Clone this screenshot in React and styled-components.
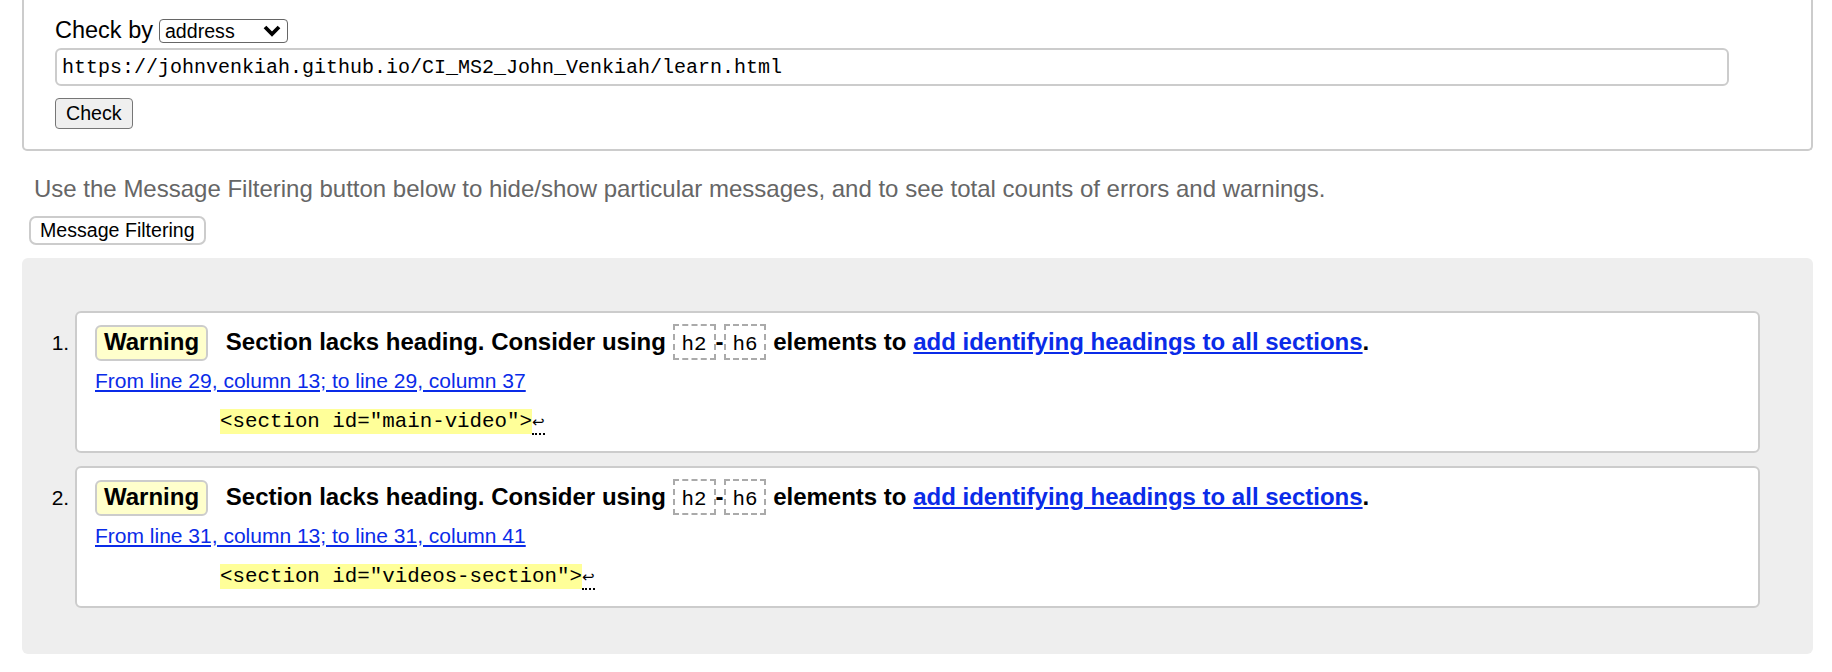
import React from 'react';
import styled, { createGlobalStyle } from 'styled-components';

const GlobalStyle = createGlobalStyle`
  body {
    margin: 0;
    background: #fff;
    color: #000;
    font-family: "Liberation Sans", Arial, Helvetica, sans-serif;
    font-size: 23.5px;
  }
`;

const Page = styled.div`
  padding: 0 19px 0 22px;
`;

const Fieldset = styled.fieldset`
  margin: 0;
  min-width: 0;
  padding: 17px 31px 20px;
  border: 2px solid #ccc;
  border-top: none;
  border-radius: 0 0 5px 5px;
  display: flex;
  flex-direction: column;
  align-items: flex-start;
`;

const CheckByRow = styled.div`
  display: flex;
  align-items: baseline;
  gap: 6px;
`;

const FakeSelect = styled.span`
  display: inline-flex;
  align-items: center;
  justify-content: space-between;
  box-sizing: border-box;
  width: 129px;
  height: 24px;
  padding: 0 5px;
  border: 1px solid #666;
  border-radius: 4px;
  font-size: 19.6px;
  line-height: 20px;
`;

const UrlInput = styled.input`
  box-sizing: border-box;
  width: 1674px;
  height: 38px;
  margin: 4px 0 0;
  padding: 0 5px;
  border: 2px solid #ccc;
  border-radius: 6px;
  background: #fff;
  color: #000;
  font-family: "Liberation Mono", "Courier New", monospace;
  font-size: 20px;
  outline: none;
`;

const CheckButton = styled.button`
  margin-top: 12px;
  height: 31px;
  padding: 0 10px;
  border: 1px solid #767676;
  border-radius: 4px;
  background: #efefef;
  color: #000;
  font-family: "Liberation Sans", Arial, sans-serif;
  font-size: 19.6px;
`;

const Intro = styled.p`
  margin: 24px 0 0 12px;
  color: #666;
  font-size: 24px;
  line-height: normal;
`;

const FilterButton = styled.button`
  display: block;
  margin: 13px 0 0 7px;
  height: 29px;
  padding: 0 9px;
  border: 2px solid #ccc;
  border-radius: 7px;
  background: #fff;
  color: #000;
  font-family: "Liberation Sans", Arial, sans-serif;
  font-size: 19.6px;
`;

const Results = styled.ol`
  margin: 13px 0 0;
  padding: 53px 53px 46px;
  background: #eee;
  border-radius: 6px;
  list-style: decimal;
`;

const Message = styled.li`
  background: #fff;
  border: 2px solid #ccc;
  border-radius: 6px;
  padding: 11px 18px 14px;
  margin-bottom: 13px;
  font-size: 21px;

  &:last-child {
    margin-bottom: 0;
  }

  &::marker {
    font-size: 21px;
  }
`;

const Heading = styled.p`
  margin: 0;
  font-size: 24px;
  font-weight: bold;
  line-height: 30px;
`;

const Badge = styled.strong`
  display: inline-block;
  padding: 1px 7px 4px;
  margin-right: 11px;
  line-height: 27px;
  border: 2px solid #ccc;
  border-radius: 6px;
  background: #ffc;
`;

const Tag = styled.code`
  display: inline-block;
  padding: 7px 7px 1px;
  line-height: 24px;
  border: 2px dashed #aaa;
  font-family: "Liberation Mono", "Courier New", monospace;
  font-size: 20.8px;
  font-weight: normal;
`;

const Link = styled.a`
  color: #0a2be8;
  text-decoration: underline;
`;

const Location = styled.p`
  margin: 8px 0 0;
  line-height: 24px;
`;

const Extract = styled.p`
  margin: 14px 0 0 125px;
  line-height: 30px;
  font-family: "Liberation Mono", "Courier New", monospace;
  font-size: 20.8px;
`;

const Highlight = styled.code`
  padding: 1px 0;
  background: #ff9;
  font-family: inherit;
`;

const LineEnd = styled.b`
  padding-bottom: 2px;
  border-bottom: 2px dotted #000;
  font-family: "DejaVu Sans", sans-serif;
  font-size: 15px;
  font-weight: normal;
`;

const Chevron = () => (
  <svg width="20" height="14" viewBox="0 0 20 14">
    <polyline points="3,3 10,10 17,3" fill="none" stroke="#000" strokeWidth="3.8" strokeLinejoin="miter" />
  </svg>
);

const messages = [
  { from: 'From line 29, column 13; to line 29, column 37', code: '<section id="main-video">' },
  { from: 'From line 31, column 13; to line 31, column 41', code: '<section id="videos-section">' },
];

export default function App() {
  return (
    <Page>
      <GlobalStyle />
      <Fieldset>
        <CheckByRow>
          <span>Check by</span>
          <FakeSelect>
            address
            <Chevron />
          </FakeSelect>
        </CheckByRow>
        <UrlInput readOnly value="https://johnvenkiah.github.io/CI_MS2_John_Venkiah/learn.html" />
        <CheckButton>Check</CheckButton>
      </Fieldset>
      <Intro>
        Use the Message Filtering button below to hide/show particular messages, and to see total counts of errors and warnings.
      </Intro>
      <FilterButton>Message Filtering</FilterButton>
      <Results>
        {messages.map((m) => (
          <Message key={m.from}>
            <Heading>
              <Badge>Warning</Badge> Section lacks heading. Consider using <Tag>h2</Tag>-<Tag>h6</Tag> elements to{' '}
              <Link href="#">add identifying headings to all sections</Link>.
            </Heading>
            <Location>
              <Link href="#">{m.from}</Link>
            </Location>
            <Extract>
              <Highlight>{m.code}</Highlight>
              <LineEnd>↩</LineEnd>
            </Extract>
          </Message>
        ))}
      </Results>
    </Page>
  );
}
